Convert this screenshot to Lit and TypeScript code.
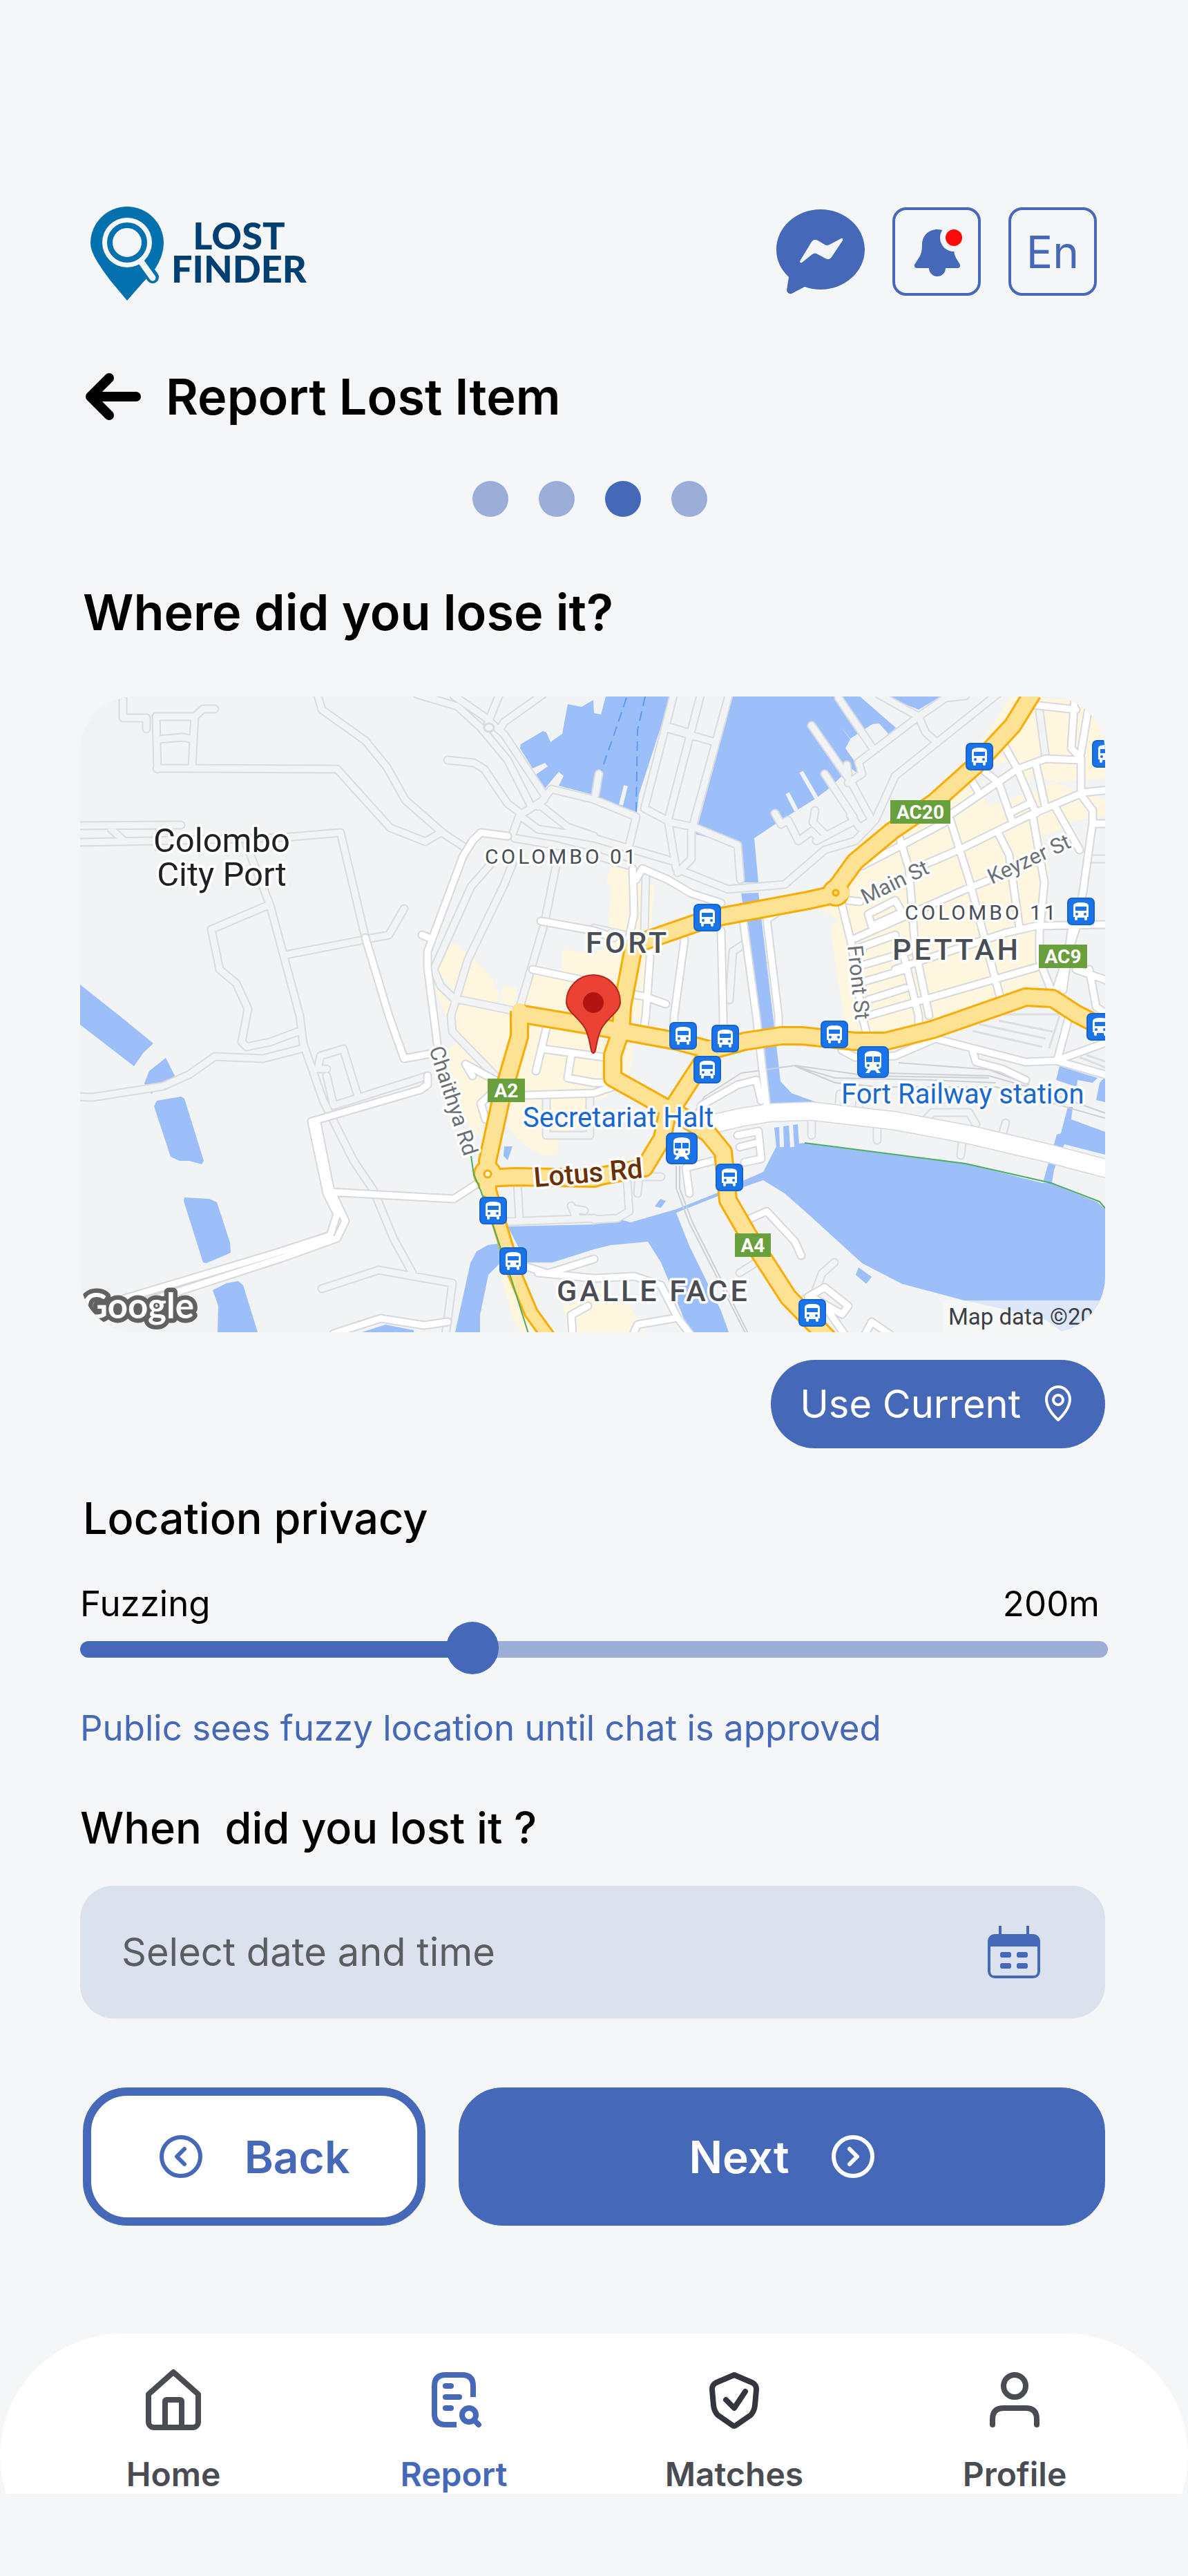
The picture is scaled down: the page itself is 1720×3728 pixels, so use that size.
import { LitElement, html, svg, css } from "lit";
import { customElement, property, state } from "lit/decorators.js";

/* ------------------------------------------------------------------ */
/* Map data. Points are surveyed per quarter sheet (A NW, B NE, C SW,  */
/* D SE); a letter in a list switches the sheet for what follows.      */
/* ------------------------------------------------------------------ */
const SHEETS: Record<string, [number, number]> = {
  A: [-16, -18],
  B: [744, -18],
  C: [-16, 452],
  D: [744, 452],
};

function trace(line: string, close = false): string {
  let sheet = SHEETS.A;
  const out: string[] = [];
  for (const token of line.trim().split(/\s+/)) {
    if (SHEETS[token]) {
      sheet = SHEETS[token];
      continue;
    }
    const [x, y] = token.split(",").map(Number);
    out.push(`${Math.round(x * 0.4847 + sheet[0])} ${Math.round(y / 3 + sheet[1])}`);
  }
  return "M" + out.join("L") + (close ? "Z" : "");
}
const lines = (list: string[]) => list.map((l) => trace(l)).join("");
const areas = (list: string[]) => list.map((l) => trace(l, true)).join("");

const COMMERCIAL = areas([
  "A 1085,1200 1100,1185 1150,1125 1215,1200 1265,1280 1283,1350 1275,1390 1165,1350 1110,1270 1085,1290",
  "A 1295,1310 1340,1320 1330,1400 1290,1380",
  "A 1475,1150 1520,1160 B 60,1180 70,1290 A 1530,1285 1470,1245",
  "A 1385,1260 B 70,1290 D 50,60 A 1568,1440 1360,1390",
  "C 1370,60 1568,100 D 20,120 40,200 45,300 60,345 40,380 0,400 C 1568,470 1460,565 1460,630 1420,640 1380,610 1335,560 1310,500 1320,400",
  "A 1085,1300 1110,1330 1160,1380 1300,1420 C 1310,10 1320,120 1290,300 1250,400 1230,560 1200,520 1150,400 1130,180 1160,150",
  "C 1272,1090 1300,1200 1320,1330 1345,1404 1400,1404 1330,1250 1310,1140",
  "C 1475,1290 1530,1270 D 0,1200 110,1290 150,1404 C 1495,1404",
  "B 50,790 120,810 155,850 180,880 150,1440 D 100,60 60,60 B 60,1440 0,1280 0,1170 40,1140 50,880 38,860",
  "D 85,150 115,160 115,210 105,280 75,290",
  "B 1240,55 1440,70 1500,140 1527,200 1527,410 1430,420 1380,430 1527,500 1527,570 1420,600 1400,630 1340,660 1360,800 1345,860 1335,1040 1330,1330 1210,1370 1040,1440 D 960,80 830,110 750,90 B 745,1440 705,1050 735,1030 660,970 740,960 790,790 780,690 900,600 1010,480 1110,330 1190,180",
]);
const BLOCKS = areas([
  "B 1160,370 1230,340 1300,450 1320,460 1180,530 1120,400",
  "B 1300,400 1380,420 1370,430 1300,460",
]);
const WATER = areas([
  "A 1350,262 1415,203 1425,210 1438,253 1473,215 1490,88 1530,98 1565,70 B 0,125 20,133 35,55 230,55 135,480 128,555 10,497 A 1568,490 1555,478 1463,440 1478,398 1463,380 1422,452 1395,392 1430,358 1422,343 1385,365 1348,280",
  "B 415,55 795,55 902,190 880,220 852,172 832,175 765,238 735,180 765,240 750,278 787,350 785,385 755,350 740,400 700,455 665,495 605,550 575,575 540,610 478,668 492,862 437,862 440,705 303,652",
  "B 440,910 490,905 493,930 500,1010 535,1440 D 532,0 558,315 590,365 680,415 525,425 510,165 490,0 B 488,1440 452,1020",
  "B 870,55 1035,55 970,112",
  "D 538,515 608,500 612,590 545,600",
  "D 545,598 630,583 1110,672 1340,757 1365,757 1505,840 1527,870 1527,1404 1400,1404 1340,1340 1105,1265 920,1195 800,1105 640,890 570,800 505,743 375,810 245,885 285,1030 380,1310 403,1404 285,1404 240,1240 200,1100 160,1010 50,1025 0,1045 C 1445,1100 1365,1100 1310,945 1568,935 D 0,935 80,915 110,928 245,870 375,795 440,750 505,708",
  "C 1290,1018 1250,1025 1218,1053 1198,1105 1153,1404 1228,1404 1228,1330 1252,1155 1290,1100",
  "D 1390,248 1503,300 1490,320 1445,310 1443,340 1380,310",
  "D 1510,320 1527,295 1527,405 1500,395",
  "D 1415,425 1430,425 1425,480 1527,535 1527,632 1405,588 1375,700 1368,755 1342,752 1383,545 1395,540",
  "D 782,1155 790,1122 830,1165 812,1193",
  "D 182,857 198,825 215,835 200,863",
  "A 33,1305 150,1440 C 252,150 222,190 193,248 33,68",
  "C 288,212 316,292 245,370 225,325 240,270",
  "C 262,400 335,380 345,390 403,660 397,675 360,660 330,660 303,642 254,422",
  "C 345,820 418,825 442,840 480,1015 482,1060 410,1103 400,1100 343,835",
  "C 430,1220 470,1190 505,1183 520,1200 563,1404 443,1404 445,1290",
  "C 875,1404 945,1370 1030,1395 1030,1404",
  "C 1300,597 1325,597 1310,657 1298,640",
]);
const SERVICE = lines([
  "A 160,40 160,147 232,147 232,195",
  "A 265,370 260,140 375,140 400,108 435,108",
  "A 375,140 372,240 368,365",
  "A 262,240 340,230 372,240",
  "A 262,367 800,370 960,625 1065,685 1110,645",
  "A 740,40 755,110 885,245 950,360 1005,505 1120,650 1185,710",
  "A 1040,45 1160,95 1230,190 1310,330 1380,530",
  "A 1150,50 1240,140 1300,220 1420,480",
  "A 1285,45 1250,170",
  "A 1415,45 1300,165 1290,190",
  "A 1130,330 1210,342 1240,370 1310,520 1350,560",
  "A 1400,530 1440,455 1568,500 B 125,575 105,700",
  "A 1420,500 1345,570 1325,650",
  "A 1345,570 1400,630 1500,650 B 0,670 240,770",
  "A 1330,670 1450,700 B 0,740 100,785",
  "A 1400,520 1490,620 B 0,660",
  "A 20,615 335,612",
  "A 20,688 250,680 640,665 810,645 885,1100",
  "A 125,630 165,680",
  "A 530,700 600,960 690,1440 C 700,150 760,400 850,660 910,790 970,1000 1025,1145",
  "A 595,960 425,1065 450,1240 500,1300 535,1410 C 515,145 530,165 600,145 690,95",
  "A 645,1175 955,1090 1000,975",
  "A 1260,780 1200,880 1090,1240 1110,1310 1150,1365 1320,1415",
  "A 1325,780 1300,870 1190,1200 1140,1440 C 1145,100 1280,300",
  "A 1455,790 1420,1040 1350,1390",
  "C 20,382 70,385 280,335 360,285 435,208 580,217 700,170",
  "C 745,245 750,205 820,175 860,370",
  "C 740,260 770,260",
  "C 770,290 790,420 1070,290",
  "C 755,1215 925,1135 1145,1190 1125,1420",
  "C 1340,750 1345,910",
  "C 1310,925 1568,910",
  "C 1500,855 1515,905 1515,870 1540,875",
  "C 1425,390 1425,550 1555,550 1555,380",
  "B 240,40 150,540 230,600 300,620 430,700 438,850",
  "B 405,40 290,640 290,760 250,820",
  "B 320,40 220,590 245,800 400,890 570,870 690,720 780,680 840,590 900,400 1210,40",
  "B 225,185 280,210",
  "B 225,195 355,250",
  "B 730,60 835,285",
  "B 850,45 970,140 790,340 800,390 760,430",
  "B 970,140 990,210 1025,255",
  "B 1110,50 1050,60 970,140",
  "B 650,180 770,430 830,590",
  "B 755,350 760,390",
  "B 690,390 775,580 770,600 665,680",
  "B 830,590 795,625 765,570",
  "B 540,560 560,610 580,590 610,680 650,640 670,670",
  "B 660,550 655,600 690,650",
  "B 15,390 5,480",
  "B 0,1060 90,1090",
  "B 445,1130 415,1160 405,1370",
  "B 1480,760 1540,760",
  "B 1330,120 1350,320",
  "B 155,820 150,1080",
  "D 650,490 650,550",
  "D 845,515 845,570",
  "D 1100,575 1095,635",
  "D 1230,495 1220,550",
  "D 730,440 735,370",
  "D 790,440 795,400",
  "D 990,480 1010,450 1120,450 1140,500",
  "D 435,1145 490,1095",
  "D 620,1270 660,1230 680,1150 718,1100",
  "D 100,750 105,880 70,910 0,915",
  "D 130,800 135,730 200,730",
]);
const STREETS = lines([
  "B 1310,90 1440,110",
  "B 1435,60 1425,280 1455,320 1455,480 1490,550 1490,600 1460,900 1440,1060 1380,1330",
  "B 1475,120 1455,300",
  "B 1060,570 1265,370 1350,325 1455,330",
  "B 1540,460 1460,470 1300,570 1090,720 960,800",
  "B 1215,240 1265,370 1320,560",
  "B 1320,350 1350,540",
  "B 1380,540 1450,720",
  "B 1160,370 1210,430 1250,600",
  "B 1240,560 1300,520",
  "B 1120,400 1150,470",
  "B 1065,590 1120,850 1215,1370",
  "B 1310,570 1345,860 1330,1080 1330,1200 1365,1330",
  "B 1210,650 1240,740 1270,1060",
  "B 910,655 940,800 960,1150 1000,1440",
  "B 800,790 920,700 1060,590",
  "B 780,1105 1110,890 1340,760",
  "B 760,940 795,945",
  "B 740,960 770,1130 800,1440 D 815,110",
  "B 790,1145 900,1090",
  "B 800,1220 940,1160",
  "B 810,1290 930,1240",
  "B 820,1370 930,1320",
  "B 820,1440 1320,1230",
  "B 900,1240 960,1210 1230,1080 1320,1050 1540,1045",
  "B 820,1000 900,940 920,990 830,1050 820,1000",
  "B 1540,605 1490,605",
  "B 1425,1070 1400,1330",
  "B 920,1150 970,1440 D 970,70",
  "B 1480,1240 1500,1400 1540,1440",
  "B 1440,1240 1540,1290",
  "A 1310,660 1230,645 1205,680 1175,750 1070,1160 1070,1230 1090,1440 C 1100,150",
  "A 1055,1090 1080,1105",
  "C 1080,195 1000,215 A 955,1440 885,1100",
  "B 145,800 220,850 290,910 380,950",
  "B 115,800 120,1000 105,1100",
  "B 145,800 125,850",
  "B 380,1070 385,1440 D 385,80",
  "B 170,1150 155,1440 D 148,90",
  "B 270,1110 240,1440 D 240,80",
  "B 540,1000 515,1020 550,1440 D 550,90",
  "B 445,1025 485,1440 D 515,420",
  "A 1410,1030 1568,1070 B 60,1100",
  "A 1385,1240 1530,1285",
  "B 105,1345 150,1355 215,1390",
  "C 1430,60 1395,270",
  "C 1415,175 1568,205 D 30,210",
  "C 1500,200 1490,300 1568,320 D 40,320",
  "C 1365,375 1568,365 D 60,335",
  "C 1245,480 1230,410 1260,370",
  "C 1205,290 1185,240 1270,310",
  "C 1070,290 1070,330 1050,350 725,490 770,800 800,890 780,985 620,1060 140,1270",
  "C 740,495 780,780 825,920 800,995 640,1080 160,1305",
  "C 780,795 1150,825 1220,760",
  "C 1365,1120 1430,1150 1568,1085",
  "C 1400,1145 D 0,1170 120,1160 200,1200 250,1340",
  "D 120,1404 130,1370 250,1340 290,1420",
  "C 790,1410 930,1345 1060,1375 1130,1360",
  "C 1505,1410 1500,1330 1550,1290",
  "D 460,915 515,880 600,1010 618,1070",
  "D 285,800 275,690 355,660",
  "D 320,420 430,330 485,310 500,400",
  "D 740,180 780,210 900,205 1020,130 1290,230 1380,225 1540,290",
  "D 1420,30 1385,220",
  "D 1130,180 1140,230 1220,260 1290,310",
  "D 430,550 490,530 500,650 450,665",
  "D 435,600 490,580",
  "D 1380,225 1540,140",
  "D 640,1250 690,1210 760,1290 740,1325 650,1250",
  "D 700,1310 750,1420",
  "D 810,1410 830,1360 890,1420",
]);
const EXPRESSWAY = trace("D 350,500 440,470 530,450 650,445 900,485 1120,545 1350,625 1560,705");
const TRUNK = lines([
  "B 1310,40 1250,180 1140,350 1020,510 890,640 780,770 720,890",
  "B 740,905 640,940 340,1020 120,1130",
  "B 120,1130 85,1400 D 80,95",
  "C 1345,20 1568,75 D 80,95",
  "C 1345,10 1345,120 1290,400 1250,660 1250,780",
  "C 1250,735 1330,730 1568,735 D 20,725 150,690 205,560 220,440",
  "D 80,95 55,200 55,300 215,430",
  "D 80,95 250,140 350,180",
  "D 350,180 450,140 560,118 620,118 780,140 870,140 1010,90 1290,-50 1370,-45 1440,20 1560,110",
  "D 350,170 240,420",
  "D 235,440 340,540 385,620 400,830 460,980 580,1250 700,1430",
]);
const TRUNK_NARROW = trace("C 1250,760 1290,950 1330,1150 1380,1320 1440,1440");
const PARKING = lines([
  "D 1110,80 1190,25 1390,25",
  "D 1150,65 1350,130",
  "D 1130,95 1340,165",
  "D 1390,30 1360,170",
  "D 1210,50 1370,100",
  "D 1450,210 1540,260",
  "D 1470,200 1540,235",
]);
const RAIL = lines([
  "D 270,520 330,380 440,280 600,245 820,290 1180,300",
  "D 600,248 720,300 1000,310 1200,320",
  "D 600,248 720,320 850,340 1200,340 1540,480",
  "D 910,235 1180,265 1300,330",
  "D 870,280 1180,290 1350,360 1540,460",
  "D 245,680 245,780 285,930 455,1420",
  "D 255,680 255,780 295,930 465,1420",
]);
const TRAILS = lines([
  "D 630,582 1110,672 1365,757 1510,838 1530,872",
  "C 1200,640 1210,720 1230,790 1320,1170 1375,1420",
]);
const FERRY = lines(["B 97,60 60,220 20,380", "B 153,55 130,200 125,555"]);
const PIERS = lines(["B 618,380 665,495", "B 578,475 605,550", "B 95,440 80,525", "D 560,500 562,600", "D 588,500 592,600"]);

const BUSES: [number, number][] = [
  [1282, 67], [1465, 63], [888, 300], [1429, 291], [853, 471], [914, 475], [888, 520],
  [1072, 469], [1457, 458], [578, 724], [607, 797], [920, 676], [1040, 872],
];
const TRAINS: [number, number][] = [[1125, 506], [848, 631]];
const SHIELDS: [string, number, number, number][] = [
  ["AC20", 1173, 150, 87], ["AC9", 1388, 359, 70], ["A2", 590, 553, 54], ["A4", 948, 777, 52],
];

@customElement("city-map")
export class CityMap extends LitElement {
  static styles = css`
    :host { display: block; border-radius: 80px; overflow: hidden; background: #f1f3f4; }
    svg { display: block; width: 100%; height: auto; font-family: Roboto, "Liberation Sans", sans-serif; }
    .road { fill: none; stroke-linejoin: round; stroke-linecap: round; }
    .flat { fill: none; stroke-linejoin: round; }
    .label { paint-order: stroke; stroke: #fff; stroke-width: 7px; stroke-linejoin: round; }
    .town { font-size: 49px; fill: #202124; text-anchor: middle; }
    .area { font-size: 43px; font-weight: 500; fill: #4a4e54; letter-spacing: 4px; }
    .zone { font-size: 30px; fill: #4a4e54; letter-spacing: 4px; }
    .street { font-size: 31px; fill: #6b7075; }
    .transit { font-size: 40px; fill: #1967d2; }
    .avenue { font-size: 40px; font-weight: 500; fill: #6b2f00; }
    .shield { font-size: 28px; font-weight: 700; fill: #fff; text-anchor: middle; }
    .credit { font-size: 33px; fill: #3c4043; }
    .brand { font-family: Lato, "Liberation Sans", sans-serif; font-size: 51px; font-weight: 700; fill: #fff; stroke: #616161; stroke-width: 13px; }
  `;

  render() {
    return html`<svg viewBox="0 0 1484 920" role="img" aria-label="Map of Colombo Fort">
      <rect width="1484" height="920" fill="#f1f3f4"></rect>
      <path d=${COMMERCIAL} fill="#fef6de"></path>
      <path d=${BLOCKS} fill="#f1f3f4"></path>
      <path d=${WATER} fill="#9cbff9"></path>
      <path class="flat" d=${FERRY} stroke="#5e9af3" stroke-width="2" stroke-dasharray="14 8"></path>
      <path class="flat" d=${PIERS} stroke="#f1f3f4" stroke-width="6"></path>
      <path class="flat" d=${PARKING} stroke="#dcdee2" stroke-width="3"></path>
      <path class="flat" d=${RAIL} stroke="#cccfd4" stroke-width="2"></path>
      <path class="road" d=${SERVICE} stroke="#d9dbdf" stroke-width="13"></path>
      <path class="road" d=${SERVICE} stroke="#f1f3f4" stroke-width="9"></path>
      <path class="road" d=${STREETS} stroke="#d5d8de" stroke-width="13"></path>
      <path class="road" d=${EXPRESSWAY} stroke="#d5d8de" stroke-width="28"></path>
      <path class="road" d=${STREETS} stroke="#fff" stroke-width="9"></path>
      <path class="road" d=${EXPRESSWAY} stroke="#fff" stroke-width="25"></path>
      <ellipse cx="592" cy="45" rx="7" ry="6" fill="#f1f3f4" stroke="#d9dbdf" stroke-width="3"></ellipse>
      <path class="flat" d=${TRUNK} stroke="#f9ab00" stroke-width="28"></path>
      <path class="flat" d=${TRUNK_NARROW} stroke="#f9ab00" stroke-width="22"></path>
      <circle cx="1094" cy="284" r="20" fill="#f9ab00"></circle>
      <circle cx="590" cy="691" r="21" fill="#f9ab00"></circle>
      <path class="road" d=${TRUNK} stroke="#fde293" stroke-width="22"></path>
      <path class="road" d=${TRUNK_NARROW} stroke="#fde293" stroke-width="16"></path>
      <circle cx="1094" cy="284" r="17" fill="#fde293"></circle>
      <circle cx="590" cy="691" r="18" fill="#fde293"></circle>
      <circle cx="1094" cy="284" r="4" fill="#fde293" stroke="#f9ab00" stroke-width="3"></circle>
      <circle cx="590" cy="691" r="5" fill="#fef6de" stroke="#f9ab00" stroke-width="3"></circle>
      <path class="flat" d=${TRAILS} stroke="#4cae60" stroke-width="2"></path>

      <text class="label town"><tspan x="205" y="225">Colombo</tspan><tspan x="205" y="274">City Port</tspan></text>
      <text class="label zone" x="586" y="242">COLOMBO 01</text>
      <text class="label zone" x="1194" y="323">COLOMBO 11</text>
      <text class="label area" x="732" y="371">FORT</text>
      <text class="label area" x="1176" y="381">PETTAH</text>
      <text class="label area" x="690" y="875">GALLE FACE</text>
      <text class="label street" transform="translate(1137 301) rotate(-26)">Main St</text>
      <text class="label street" transform="translate(1320 272) rotate(-25)">Keyzer St</text>
      <text class="label street" transform="translate(1111 361) rotate(84)">Front St</text>
      <text class="label street" transform="translate(505 510) rotate(72)">Chaithya Rd</text>
      <text class="label transit" x="641" y="623">Secretariat Halt</text>
      <text class="label transit" x="1102" y="589">Fort Railway station</text>
      <text class="label avenue" transform="translate(658 710) rotate(-5)">Lotus Rd</text>

      ${SHIELDS.map(([name, x, y, w]) => svg`
        <rect x=${x} y=${y} width=${w} height="34" fill="#6a9f3e"></rect>
        <text class="shield" x=${x + w / 2} y=${y + 27}>${name}</text>`)}
      ${BUSES.map(([x, y]) => svg`<g transform="translate(${x} ${y})">
        <rect x="1" y="1" width="38" height="38" rx="6" fill="#1a73e8" stroke="#1765cc" stroke-width="2"></rect>
        <path d="M9 12q0-5 11-5t11 5v16h-2v3q0 2-2 2t-2-2v-2H15v2q0 2-2 2t-2-2v-3H9z" fill="#fff"></path>
        <path d="M12 13h16v6H12z" fill="#1a73e8"></path>
        <circle cx="14" cy="24" r="2" fill="#1a73e8"></circle><circle cx="26" cy="24" r="2" fill="#1a73e8"></circle>
      </g>`)}
      ${TRAINS.map(([x, y]) => svg`<g transform="translate(${x} ${y})">
        <rect x="1" y="1" width="44" height="44" rx="7" fill="#1a73e8" stroke="#1765cc" stroke-width="2"></rect>
        <path d="M11 13q0-6 12-6t12 6v15q0 5-5 5l4 6h-5l-3-4h-6l-3 4h-5l4-6q-5 0-5-5z" fill="#fff"></path>
        <path d="M13 15h9v8h-9zM24 15h9v8h-9z" fill="#1a73e8"></path>
        <circle cx="16" cy="28" r="2" fill="#1a73e8"></circle><circle cx="30" cy="28" r="2" fill="#1a73e8"></circle>
      </g>`)}
      <path d="M743 516C738 516 740 497 731 480C721 463 704 456 704 442A39 39 0 0 1 782 442C782 456 765 463 755 480C746 497 748 516 743 516Z"
        fill="#ea4335" stroke="#b3261e" stroke-width="2"></path>
      <circle cx="743" cy="443" r="15" fill="#b31412"></circle>
      <rect x="1250" y="874" width="234" height="46" fill="#f8f9fa" fill-opacity="0.7"></rect>
      <text class="credit" x="1257" y="909">Map data ©20</text>
      <text class="label brand" x="3" y="900">Google</text>
    </svg>`;
  }
}

const TABS = [
  { id: "home", text: "Home" },
  { id: "report", text: "Report" },
  { id: "matches", text: "Matches" },
  { id: "profile", text: "Profile" },
];

const TAB_ICONS: Record<string, unknown> = {
  home: svg`<path d="M3 10L12 2L21 10V20A2 2 0 0 1 19 22H5A2 2 0 0 1 3 20Z"></path><path d="M9 22V12.500A.5.5 0 0 1 9.500 12H14.500A.5.5 0 0 1 15 12.500V22"></path>`,
  report: svg`<path d="M13 21H9Q5 21 5 17V7Q5 3 9 3H15Q19 3 19 7V11"></path><path d="M9 7H11M9 11H14M9 15H11" stroke-linecap="round"></path><circle cx="17.500" cy="17.500" r="2.500"></circle><path d="M19.500 19.500L21 21" stroke-linecap="round"></path>`,
  matches: svg`<path d="M12 3L18.600 5.800Q20.100 6.600 20 8.300L19.500 14Q19.300 16 18 17.500L12.700 21.200Q12 21.700 11.300 21.200L6 17.500Q4.700 16 4.500 14L4 8.300Q3.900 6.600 5.400 5.800Z"></path><path d="M9 12L12 15L16 9" stroke-linecap="round"></path>`,
  profile: svg`<circle cx="12" cy="7" r="4"></circle><path d="M4 21V19Q4 15 8 15H16Q20 15 20 19V21" stroke-linecap="round"></path>`,
};

@customElement("tab-bar")
export class TabBar extends LitElement {
  @property() current = "report";

  static styles = css`
    :host { display: block; }
    .bar { position: relative; overflow: hidden; height: 232px; box-sizing: border-box; padding: 48px 48px 0; display: grid; grid-template-columns: repeat(4, 1fr); }
    .bar::before { content: ""; position: absolute; inset: 0 0 auto; height: 352px; border-radius: 176px; background: #fff; }
    .tab { position: relative; display: flex; flex-direction: column; align-items: center; gap: 28px; color: #4a4c53; text-decoration: none; font-size: 48px; line-height: 64px; font-weight: 600; }
    .tab.on { color: #4568b8; }
    .tab svg { width: 96px; height: 96px; fill: none; stroke: currentColor; stroke-width: 2px; stroke-linejoin: round; }
    .tab.matches svg { color: #33353f; }
  `;

  render() {
    return html`<nav class="bar" aria-label="Main">
      ${TABS.map((t) => html`<a class="tab ${t.id} ${t.id === this.current ? "on" : ""}" href="#${t.id}">
        <svg viewBox="0 0 24 24" aria-hidden="true">${TAB_ICONS[t.id]}</svg><span>${t.text}</span>
      </a>`)}
    </nav>`;
  }
}

@customElement("app-root")
export class AppRoot extends LitElement {
  @state() private fuzz = 200;
  private readonly step = 2;

  static styles = css`
    :host { display: block; min-height: 100vh; box-sizing: border-box; padding: 300px 0 120px; background: #f5f6f8; color: #000; font-family: Inter, "Liberation Sans", sans-serif; }
    * { box-sizing: border-box; margin: 0; }
    button, input { font: inherit; border: 0; padding: 0; background: none; color: inherit; cursor: pointer; }
    svg { display: block; flex: none; }
    main { padding: 0 120px 0 116px; }

    header { display: flex; align-items: flex-start; justify-content: space-between; height: 128px; padding: 0 12px 0 15px; }
    .logo { display: flex; align-items: center; gap: 9px; color: #003f72; text-decoration: none; }
    .logo svg { overflow: visible; }
    .logo-name { padding-bottom: 6px; font-family: Lato, "Liberation Sans", sans-serif; font-size: 54px; line-height: 48px; font-weight: 900; text-align: center; }
    .tools { display: flex; gap: 40px; color: #4568b8; }
    .tool { width: 128px; height: 128px; display: grid; place-items: center; font-size: 64px; }
    .boxed { border: 4px solid #4568b8; border-radius: 20px; }

    .title { display: flex; align-items: center; gap: 36px; padding-left: 8px; margin-top: 98px; }
    h1, h2 { font-size: 72px; line-height: 96px; font-weight: 600; }
    .steps { display: flex; justify-content: center; gap: 44px; margin: 74px 12px 90px 4px; padding: 0; list-style: none; }
    .steps li { width: 52px; height: 52px; border-radius: 50%; background: #9cadd7; }
    .steps .on { background: #4568b8; }
    h2 { padding-left: 4px; }
    city-map { margin: 74px 0 40px; }

    .locate { display: flex; align-items: center; gap: 34px; height: 128px; margin-left: auto; padding: 0 48px 0 42px; border-radius: 64px; background: #4568b8; color: #fff; font-size: 56px; }

    h3, .ask { display: block; font-size: 63px; line-height: 80px; font-weight: 500; white-space: pre; }
    h3 { margin: 61px 0 56px; padding-left: 4px; }
    .range { display: flex; justify-content: space-between; padding-right: 8px; font-size: 51px; line-height: 56px; }
    .slider { appearance: none; -webkit-appearance: none; display: block; width: calc(100% + 4px); height: 76px; }
    .slider::-webkit-slider-runnable-track { height: 24px; border-radius: 12px; background: linear-gradient(to right, #4568b8 var(--fill), #9cadd7 var(--fill)); }
    .slider::-webkit-slider-thumb { -webkit-appearance: none; width: 76px; height: 76px; margin-top: -28px; border-radius: 50%; background: #4568b8; }
    .hint { margin-top: 48px; font-size: 51px; line-height: 56px; color: #4568b8; }
    .ask { margin: 76px 0 44px; }
    .field { display: flex; align-items: center; height: 192px; padding: 0 94px 0 60px; border-radius: 48px; background: #dce1ee; }
    .field input { flex: 1; min-width: 0; height: 100%; font-size: 56px; outline: 0; }
    .field input::placeholder { color: #5b5d61; opacity: 1; }
    .field button { color: #4568b8; }

    .actions { display: grid; grid-template-columns: 496fr 936fr; gap: 48px; margin: 100px 0 156px; padding-left: 4px; }
    .action { display: flex; align-items: center; justify-content: center; gap: 60px; height: 200px; border: 12px solid #4568b8; border-radius: 64px; background: #4568b8; color: #fff; font-size: 64px; font-weight: 600; }
    .action.back { background: #fff; color: #4568b8; }
  `;

  private onFuzz(e: Event) {
    this.fuzz = Number((e.target as HTMLInputElement).value);
  }

  render() {
    const fill = ((this.fuzz - 20) / 480) * 100;
    return html`
      <main>
        <header>
          <a class="logo" href="#home">
            <svg width="108" height="136" viewBox="0 0 108 136" aria-hidden="true">
              <path d="M53 135L28 105Q18 92 10 79Q0 63 0 52A53 53 0 0 1 106 52Q106 70 93 90L81 103Z" fill="#0271ae"></path>
              <path d="M74 80L90 101" stroke="#0271ae" stroke-width="18" stroke-linecap="round"></path>
              <circle cx="53" cy="51" r="36" fill="#f5f6f8"></circle>
              <path d="M72 77L90 102" stroke="#f5f6f8" stroke-width="9" stroke-linecap="round"></path>
              <circle cx="53" cy="51" r="25" fill="none" stroke="#0271ae" stroke-width="8"></circle>
            </svg>
            <span class="logo-name">LOST<br />FINDER</span>
          </a>
          <div class="tools">
            <button class="tool" aria-label="Messages">
              <svg width="128" height="128" viewBox="0 0 128 128" fill="currentColor">
                <path d="M64 3C99 3 128 29 128 61S99 119 64 119Q52 119 41 115L22 125Q16 126 15 120L18 101Q0 84 0 61C0 29 29 3 64 3Z"></path>
                <path d="M34 78L51 50Q54 45 60 48L70 54Q73 56 77 54L94 45Q97 44 96 48L80 72Q77 77 71 74L60 68Q56 65 52 68L37 80Q34 81 34 78Z" fill="#f5f6f8"></path>
              </svg>
            </button>
            <button class="tool boxed" aria-label="Notifications">
              <svg width="120" height="120" viewBox="4 4 120 120" fill="currentColor">
                <path d="M65 32C52 32 43 42 43 54Q43 66 39 72L32 83Q31 88 36 88H53A12 12 0 0 0 77 88H94Q99 88 98 83L92 73Q89 68 89 60V44L72 33Q69 32 65 32Z"></path>
                <circle cx="89" cy="44" r="20" fill="#f5f6f8"></circle>
                <circle cx="89" cy="44" r="12" fill="#ff0a0a"></circle>
              </svg>
            </button>
            <button class="tool boxed" aria-label="Language">En</button>
          </div>
        </header>

        <div class="title">
          <button aria-label="Go back">
            <svg width="80" height="68" viewBox="0 0 80 68" fill="none" stroke="currentColor" stroke-width="14" stroke-linecap="round" stroke-linejoin="round">
              <path d="M73 34H8M34 7L7 34L34 61"></path>
            </svg>
          </button>
          <h1>Report Lost Item</h1>
        </div>
        <ol class="steps" aria-label="Step 3 of 4">
          ${[0, 1, 2, 3].map((i) => html`<li class=${i === this.step ? "on" : ""}></li>`)}
        </ol>

        <h2>Where did you lose it?</h2>
        <city-map></city-map>
        <button class="locate">
          <span>Use Current</span>
          <svg width="40" height="54" viewBox="0 0 40 54" fill="none" stroke="currentColor" stroke-width="4" stroke-linejoin="round">
            <path d="M20 50Q3 34 3 20A17 18 0 0 1 37 20Q37 34 20 50Z"></path><circle cx="20" cy="21" r="7"></circle>
          </svg>
        </button>

        <h3>Location privacy</h3>
        <div class="range"><label for="fuzz">Fuzzing</label><output for="fuzz">${this.fuzz}m</output></div>
        <input id="fuzz" class="slider" type="range" min="20" max="500" step="10" .value=${String(this.fuzz)}
          style="--fill: ${fill}%" @input=${this.onFuzz} />
        <p class="hint">Public sees fuzzy location until chat is approved</p>

        <label class="ask" for="when">When  did you lost it ?</label>
        <div class="field">
          <input id="when" type="text" placeholder="Select date and time" readonly />
          <button aria-label="Open calendar">
            <svg width="76" height="76" viewBox="0 0 76 76" fill="currentColor">
              <path d="M16 0h4v14h-4zM56 0h4v14h-4z"></path>
              <path d="M10 12H66A10 10 0 0 1 76 22V66A10 10 0 0 1 66 76H10A10 10 0 0 1 0 66V22A10 10 0 0 1 10 12ZM4 30V66Q4 72 10 72H66Q72 72 72 66V30Z" fill-rule="evenodd"></path>
              <rect x="18" y="38" width="16" height="8" rx="3"></rect><rect x="42" y="38" width="16" height="8" rx="3"></rect>
              <rect x="18" y="54" width="16" height="8" rx="3"></rect><rect x="42" y="54" width="16" height="8" rx="3"></rect>
            </svg>
          </button>
        </div>

        <div class="actions">
          <button class="action back">
            <svg width="64" height="64" viewBox="0 0 64 64" fill="none" stroke="currentColor" stroke-width="6" stroke-linecap="round" stroke-linejoin="round">
              <circle cx="32" cy="32" r="28"></circle><path d="M37 21L26 32L37 43"></path>
            </svg>
            <span>Back</span>
          </button>
          <button class="action">
            <span>Next</span>
            <svg width="64" height="64" viewBox="0 0 64 64" fill="none" stroke="currentColor" stroke-width="6" stroke-linecap="round" stroke-linejoin="round">
              <circle cx="32" cy="32" r="28"></circle><path d="M27 21L38 32L27 43"></path>
            </svg>
          </button>
        </div>
      </main>
      <tab-bar current="report"></tab-bar>
    `;
  }
}
